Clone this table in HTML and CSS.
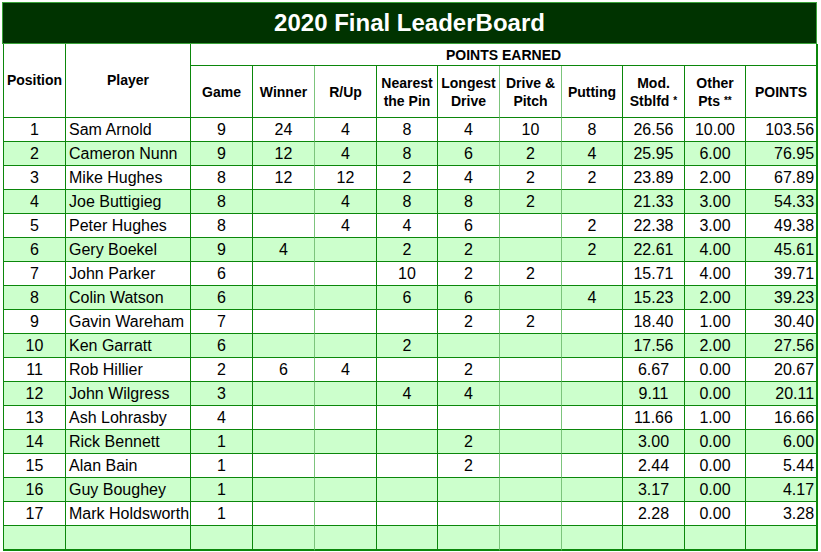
FILE: index.html
```html
<!DOCTYPE html>
<html>
<head>
<meta charset="utf-8">
<link rel="stylesheet" href="styles.css">
</head>
<body>
<div class="board">
  <div class="title">2020 Final LeaderBoard</div>
  <table class="lb">
    <colgroup>
      <col class="c-pos"><col class="c-player"><col class="c-n62"><col class="c-n62"><col class="c-n62"><col class="c-n61"><col class="c-n62"><col class="c-n62"><col class="c-n61"><col class="c-n62"><col class="c-n61"><col class="c-pts">
    </colgroup>
    <thead>
      <tr class="h1">
        <th rowspan="2" class="first">Position</th>
        <th rowspan="2">Player</th>
        <th colspan="10" class="last">POINTS EARNED</th>
      </tr>
      <tr class="h2">
        <th>Game</th>
        <th class="lt">Winner</th>
        <th>R/Up</th>
        <th>Nearest<br>the Pin</th>
        <th class="lt">Longest<br>Drive</th>
        <th class="lt">Drive &amp;<br>Pitch</th>
        <th>Putting</th>
        <th>Mod.<br>Stblfd <span class="sm">*</span></th>
        <th>Other<br>Pts <span class="sm">**</span></th>
        <th class="last">POINTS</th>
      </tr>
    </thead>
    <tbody>
      <tr><td class="first">1</td><td class="name">Sam Arnold</td><td>9</td><td class="lt">24</td><td>4</td><td>8</td><td class="lt">4</td><td class="lt">10</td><td>8</td><td>26.56</td><td>10.00</td><td class="last tot">103.56</td></tr>
      <tr class="g"><td class="first">2</td><td class="name">Cameron Nunn</td><td>9</td><td class="lt">12</td><td>4</td><td>8</td><td class="lt">6</td><td class="lt">2</td><td>4</td><td>25.95</td><td>6.00</td><td class="last tot">76.95</td></tr>
      <tr><td class="first">3</td><td class="name">Mike Hughes</td><td>8</td><td class="lt">12</td><td>12</td><td>2</td><td class="lt">4</td><td class="lt">2</td><td>2</td><td>23.89</td><td>2.00</td><td class="last tot">67.89</td></tr>
      <tr class="g"><td class="first">4</td><td class="name">Joe Buttigieg</td><td>8</td><td class="lt"></td><td>4</td><td>8</td><td class="lt">8</td><td class="lt">2</td><td></td><td>21.33</td><td>3.00</td><td class="last tot">54.33</td></tr>
      <tr><td class="first">5</td><td class="name">Peter Hughes</td><td>8</td><td class="lt"></td><td>4</td><td>4</td><td class="lt">6</td><td class="lt"></td><td>2</td><td>22.38</td><td>3.00</td><td class="last tot">49.38</td></tr>
      <tr class="g"><td class="first">6</td><td class="name">Gery Boekel</td><td>9</td><td class="lt">4</td><td></td><td>2</td><td class="lt">2</td><td class="lt"></td><td>2</td><td>22.61</td><td>4.00</td><td class="last tot">45.61</td></tr>
      <tr><td class="first">7</td><td class="name">John Parker</td><td>6</td><td class="lt"></td><td></td><td>10</td><td class="lt">2</td><td class="lt">2</td><td></td><td>15.71</td><td>4.00</td><td class="last tot">39.71</td></tr>
      <tr class="g"><td class="first">8</td><td class="name">Colin Watson</td><td>6</td><td class="lt"></td><td></td><td>6</td><td class="lt">6</td><td class="lt"></td><td>4</td><td>15.23</td><td>2.00</td><td class="last tot">39.23</td></tr>
      <tr><td class="first">9</td><td class="name">Gavin Wareham</td><td>7</td><td class="lt"></td><td></td><td></td><td class="lt">2</td><td class="lt">2</td><td></td><td>18.40</td><td>1.00</td><td class="last tot">30.40</td></tr>
      <tr class="g"><td class="first">10</td><td class="name">Ken Garratt</td><td>6</td><td class="lt"></td><td></td><td>2</td><td class="lt"></td><td class="lt"></td><td></td><td>17.56</td><td>2.00</td><td class="last tot">27.56</td></tr>
      <tr><td class="first">11</td><td class="name">Rob Hillier</td><td>2</td><td class="lt">6</td><td>4</td><td></td><td class="lt">2</td><td class="lt"></td><td></td><td>6.67</td><td>0.00</td><td class="last tot">20.67</td></tr>
      <tr class="g"><td class="first">12</td><td class="name">John Wilgress</td><td>3</td><td class="lt"></td><td></td><td>4</td><td class="lt">4</td><td class="lt"></td><td></td><td>9.11</td><td>0.00</td><td class="last tot">20.11</td></tr>
      <tr><td class="first">13</td><td class="name">Ash Lohrasby</td><td>4</td><td class="lt"></td><td></td><td></td><td class="lt"></td><td class="lt"></td><td></td><td>11.66</td><td>1.00</td><td class="last tot">16.66</td></tr>
      <tr class="g"><td class="first">14</td><td class="name">Rick Bennett</td><td>1</td><td class="lt"></td><td></td><td></td><td class="lt">2</td><td class="lt"></td><td></td><td>3.00</td><td>0.00</td><td class="last tot">6.00</td></tr>
      <tr><td class="first">15</td><td class="name">Alan Bain</td><td>1</td><td class="lt"></td><td></td><td></td><td class="lt">2</td><td class="lt"></td><td></td><td>2.44</td><td>0.00</td><td class="last tot">5.44</td></tr>
      <tr class="g"><td class="first">16</td><td class="name">Guy Boughey</td><td>1</td><td class="lt"></td><td></td><td></td><td class="lt"></td><td class="lt"></td><td></td><td>3.17</td><td>0.00</td><td class="last tot">4.17</td></tr>
      <tr><td class="first">17</td><td class="name">Mark Holdsworth</td><td>1</td><td class="lt"></td><td></td><td></td><td class="lt"></td><td class="lt"></td><td></td><td>2.28</td><td>0.00</td><td class="last tot">3.28</td></tr>
      <tr class="g end"><td class="first"></td><td class="name"></td><td></td><td class="lt"></td><td></td><td></td><td class="lt"></td><td class="lt"></td><td></td><td></td><td></td><td class="last tot"></td></tr>
    </tbody>
  </table>
</div>
</body>
</html>
```

FILE: styles.css
```css
html, body {
  margin: 0;
  padding: 0;
  background: #ffffff;
}

body {
  font-family: "Liberation Sans", Arial, sans-serif;
  color: #000;
}

.board {
  padding: 2px 0 0 2px;
  width: 815px;
}

.title {
  box-sizing: border-box;
  width: 815px;
  height: 42px;
  background: #003300;
  border: 1px solid #3aa33a;
  color: #ffffff;
  font-weight: bold;
  font-size: 24px;
  line-height: 40px;
  text-align: center;
}

.lb {
  margin-left: 1px;
  border-collapse: separate;
  border-spacing: 0;
  table-layout: fixed;
  width: 814px;
}

.c-pos { width: 63px; }
.c-player { width: 125px; }
.c-n62 { width: 62px; }
.c-n61 { width: 61px; }
.c-pts { width: 72px; }

.lb th,
.lb td {
  box-sizing: border-box;
  padding: 0;
  border-right: 1px solid #0b870b;
  border-bottom: 1px solid #0b870b;
  text-align: center;
  vertical-align: middle;
  overflow: hidden;
  white-space: nowrap;
}

.lb .first {
  border-left: 1px solid #0b870b;
}

.lb .lt {
  border-right-color: #7cc47c;
}

.lb .last {
  border-right: 2px solid #0b870b;
}

.lb th {
  font-size: 14px;
  font-weight: bold;
  line-height: 18px;
}

.h1 th {
  height: 22px;
}

.h1 th[rowspan] {
  padding-bottom: 2px;
}

.h2 th {
  height: 52px;
}

.sm {
  font-size: 10px;
  vertical-align: 2px;
}

.lb td {
  height: 24px;
  font-size: 16px;
  line-height: 18px;
  padding-top: 1px;
}

.lb td.name {
  text-align: left;
  padding-left: 3px;
}

.lb td.tot {
  text-align: right;
  padding-right: 2px;
}

.lb tr.g td {
  background: #ccffcc;
}

.lb tr.end td {
  border-bottom: 2px solid #0b870b;
  height: 25px;
}
```
